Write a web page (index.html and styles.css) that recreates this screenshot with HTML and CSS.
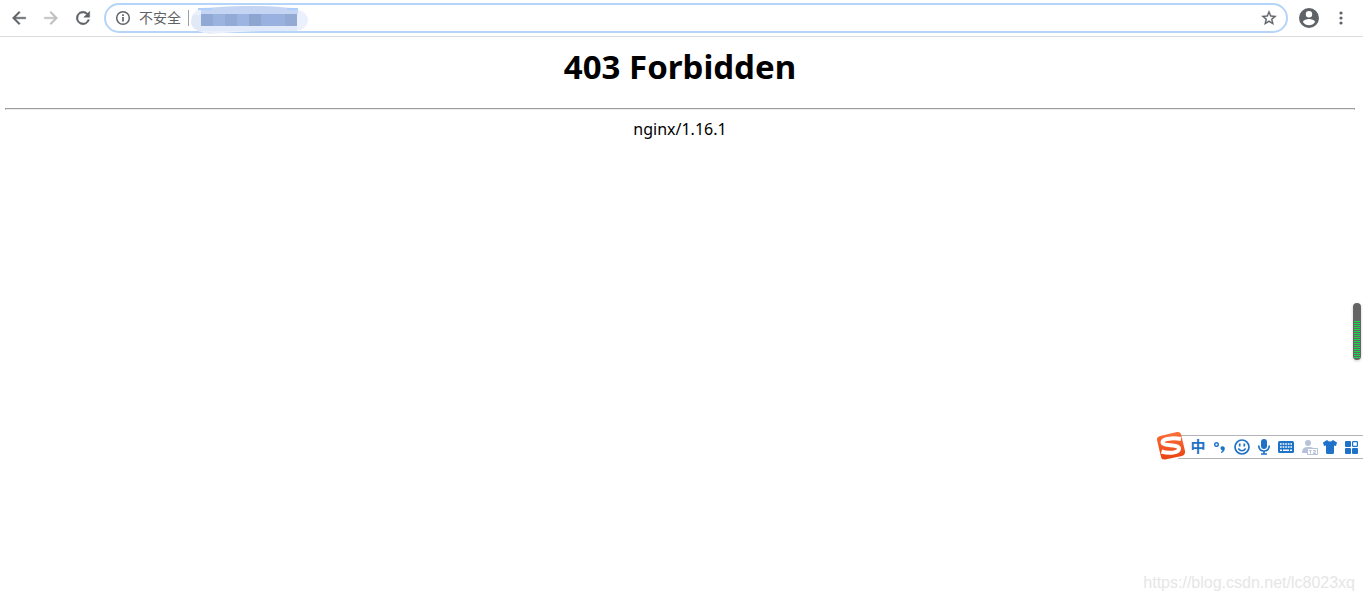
FILE: index.html
```html
<!DOCTYPE html>
<html lang="zh-CN">
<head>
<meta charset="utf-8">
<title>403 Forbidden</title>
<link rel="stylesheet" href="styles.css">
</head>
<body>
<header class="toolbar">
  <nav class="nav">
    <button class="icon-btn" aria-label="后退"><svg width="20" height="20" viewBox="0 0 24 24" fill="#5f6368"><path d="M20 11H7.800l5.600-5.600L12 4l-8 8 8 8 1.400-1.400L7.800 13H20z" stroke="#5f6368" stroke-width=".5"/></svg></button>
    <button class="icon-btn" aria-label="前进" disabled><svg width="20" height="20" viewBox="0 0 24 24" fill="#bcbec0"><path d="M4 11h12.200l-5.600-5.600L12 4l8 8-8 8-1.400-1.400 5.600-5.600H4z" stroke="#bcbec0" stroke-width=".5"/></svg></button>
    <button class="icon-btn" aria-label="重新加载"><svg width="20" height="20" viewBox="0 0 24 24" fill="#5f6368"><path d="M17.650 6.350A8 8 0 1 0 19.730 14h-2.080A6 6 0 1 1 12 6c1.660 0 3.140.69 4.220 1.780L13 11h7V4z" stroke="#5f6368" stroke-width=".6"/></svg></button>
  </nav>
  <div class="omnibox">
    <button class="icon-btn info" aria-label="网站信息"><svg width="16" height="16" viewBox="0 0 16 16" fill="none" stroke="#5f6368"><circle cx="8" cy="8" r="6.300" stroke-width="1.500"/><path d="M8 7v4.500M8 4.300v1.700" stroke-width="1.700"/></svg></button>
    <span class="security">不安全</span>
    <span class="divider"></span>
    <input class="address" type="text" aria-label="地址">
    <button class="icon-btn star" aria-label="收藏"><svg width="18" height="18" viewBox="0 0 24 24" fill="#5f6368"><path stroke="#5f6368" stroke-width=".4" d="M22 9.240l-7.190-.62L12 2 9.190 8.630 2 9.240l5.460 4.730L5.820 21 12 17.270 18.180 21l-1.630-7.030zM12 15.400l-3.760 2.270 1-4.280-3.320-2.880 4.380-.38L12 6.100l1.710 4.040 4.380.38-3.320 2.880 1 4.280z"/></svg></button>
    <svg class="redaction" width="118" height="28" viewBox="0 0 118 28" aria-hidden="true">
      <path d="M8 3Q10 1 30 1Q60-1 90 1Q103 1 108 4Q117 7 117 14Q117 23 105 25Q60 24 20 28Q0 26 0 15Q0 7 8 3z" fill="#eaf1fc"/>
      <path d="M10 3Q30 0 59 0Q90 0 107 4V8H10z" fill="#c3d5f2"/>
      <path d="M7 3h14M96 3h11" stroke="#afd0fa" stroke-width="2"/>
      <path d="M2 9h8v17h10v1Q0 26 0 16z" fill="#e1e9f6"/>
      <path d="M10 20h96v5H10z" fill="#e0eafa"/>
      <path d="M10 8h12v12H10z" fill="#91a9d4"/><path d="M22 8h12v12H22z" fill="#9ab3df"/><path d="M34 8h12v12H34z" fill="#91aad6"/><path d="M46 8h12v12H46z" fill="#9bb4e2"/><path d="M58 8h12v12H58z" fill="#8da6d1"/><path d="M70 8h24v12H70z" fill="#98b1df"/><path d="M94 8h12v12H94z" fill="#92aad4"/>
    </svg>
  </div>
  <div class="actions">
    <button class="icon-btn" aria-label="用户"><svg width="24" height="24" viewBox="0 0 24 24" fill="#5f6368"><path d="M12 2a10 10 0 1 0 0 20 10 10 0 0 0 0-20zm0 3a3.200 3.200 0 1 1 0 6.400A3.200 3.200 0 0 1 12 5zm0 14.200a7.200 7.200 0 0 1-6-3.220c.03-1.990 4-3.080 6-3.080s5.970 1.090 6 3.080a7.200 7.200 0 0 1-6 3.220z"/></svg></button>
    <button class="icon-btn" aria-label="菜单"><svg width="20" height="20" viewBox="0 0 20 20" fill="#5f6368"><circle cx="10" cy="5" r="1.600"/><circle cx="10" cy="10" r="1.600"/><circle cx="10" cy="15" r="1.600"/></svg></button>
  </div>
</header>
<main class="page">
  <h1 class="title">403 Forbidden</h1>
  <hr class="rule">
  <p class="server">nginx/1.16.1</p>
</main>
<div class="meter" aria-hidden="true"><div class="meter-bars"></div></div>
<div class="ime">
  <svg class="ime-logo" width="30" height="30" viewBox="0 0 30 30" aria-hidden="true">
    <defs><linearGradient id="flame" x1="0" y1="0" x2="0" y2="1"><stop offset="0" stop-color="#f9703c"/><stop offset="1" stop-color="#eb4210"/></linearGradient></defs>
    <path d="M4 5L21 1Q24 .5 25 3L29 20Q29.500 24 26 25L9 28.500Q5.500 29 5 26L1 9Q.5 6 4 5z" fill="url(#flame)"/>
    <path d="M25 8C17 6.500 6.500 7.500 6.500 11.300C6.500 15.500 23 13 23 17.500C23 22 13 23 5.500 20.500" fill="none" stroke="#fff" stroke-width="4"/>
  </svg>
  <div class="ime-tools">
    <button class="ime-btn ime-lang" aria-label="中文">中</button>
    <button class="ime-btn" aria-label="标点"><svg width="16" height="16" viewBox="0 0 16 16"><circle cx="4.500" cy="5.500" r="1.800" fill="none" stroke="#1e73c8" stroke-width="1.400"/><path d="M8.500 8.500Q9 7.300 10.500 7.300Q13 7.500 12.800 10Q12.300 13 9 14V12.800Q10.500 12 10.500 11.300Q8.500 11.300 8.500 8.500z" fill="#1e73c8"/></svg></button>
    <button class="ime-btn" aria-label="表情"><svg width="16" height="16" viewBox="0 0 16 16" fill="none" stroke="#1e73c8" stroke-width="1.700"><circle cx="8" cy="8" r="7"/><path d="M5.700 4.500v3M10.300 4.500v3M4.300 9.500Q8 14 11.700 9.500"/></svg></button>
    <button class="ime-btn" aria-label="语音"><svg width="16" height="16" viewBox="0 0 16 16"><rect x="5" y="0" width="6" height="10" rx="3" fill="#1e73c8"/><path d="M2.700 6.500Q3 12 8 12T13.300 6.500M8 12v3.200M5 15h6" fill="none" stroke="#1e73c8" stroke-width="1.700"/></svg></button>
    <button class="ime-btn" aria-label="软键盘"><svg width="16" height="16" viewBox="0 0 16 16"><rect y="2" width="16" height="12" rx="1.500" fill="#1e73c8"/><path d="M2 5h12M2 8h12" stroke="#fff" stroke-width="1.700" stroke-dasharray="1.700 .9"/><path d="M2 11.300h2M5 11.300h6M12 11.300h2" stroke="#fff" stroke-width="1.500"/></svg></button>
    <button class="ime-btn" aria-label="账户"><svg width="16" height="16" viewBox="-2 0 16 16" overflow="visible"><circle cx="6" cy="4" r="3" fill="#b5c2d8"/><path d="M0 14Q0 8 5 8h3q3 0 4 2H6v4z" fill="#b5c2d8"/><path d="M5.500 9.500h10v6h-10z" fill="#fff" stroke="#b5c2d8"/><path d="M7 11.500h2.500M8.500 11.500v3M11 11.500h2.500v1.500h-2v1.500H14" fill="none" stroke="#b5c2d8"/></svg></button>
    <button class="ime-btn" aria-label="皮肤"><svg width="16" height="16" viewBox="0 0 16 16"><path d="M1 3.500L5 1Q8 4 11 1L15 3.500L14 7L12 6.500V13.500Q12 15 10.500 15h-5Q4 15 4 13.500V6.500L2 7z" fill="#1e73c8"/></svg></button>
    <button class="ime-btn" aria-label="工具箱"><svg width="16" height="16" viewBox="0 0 16 16" fill="#1e73c8"><rect x="1" y="2" width="6" height="6" rx="1"/><rect x="1" y="9" width="6" height="6" rx="1"/><rect x="8" y="9" width="6" height="6" rx="1"/><rect x="8.600" y="2.600" width="4.800" height="4.800" rx=".6" fill="#fff" stroke="#1e73c8" stroke-width="1.200"/></svg></button>
  </div>
</div>
<footer class="watermark">https://blog.csdn.net/lc8023xq</footer>
</body>
</html>
```
FILE: styles.css
```css
* {
  box-sizing: border-box;
}

body {
  display: flex;
  flex-direction: column;
  position: relative;
  min-height: 100vh;
  margin: 0;
  background: #fff;
  color: #000;
  font-family: "Noto Sans", "Noto Sans CJK SC", sans-serif;
}

button {
  display: flex;
  align-items: center;
  justify-content: center;
  padding: 0;
  border: 0;
  background: none;
}

svg {
  display: block;
}

.toolbar {
  display: flex;
  align-items: center;
  gap: 11px;
  padding: 3px 12px 3px 9px;
  border-bottom: 1px solid #dadce0;
}

.nav {
  display: flex;
  gap: 12px;
}

.omnibox {
  display: flex;
  flex: 1;
  align-items: center;
  position: relative;
  height: 30px;
  margin-right: -2px;
  padding: 0 8px 0 9px;
  border: 2px solid #b5d4f9;
  border-radius: 15px;
}

.security {
  margin: 0 7px 0 8px;
  padding-bottom: 2px;
  color: #5f6368;
  font-family: "Noto Sans CJK SC", sans-serif;
  font-size: 14px;
  line-height: 20px;
}

.divider {
  width: 1px;
  height: 16px;
  background: #9aa0a6;
}

.address {
  flex: 1;
  min-width: 0;
  border: 0;
  outline: 0;
  background: none;
  font: 14px/20px "Noto Sans", sans-serif;
}

.redaction {
  position: absolute;
  top: 1px;
  left: 85px;
}

.actions {
  display: flex;
  align-items: center;
  gap: 10px;
}

.page {
  flex: 1;
  padding: 6px 8px 0 5px;
  text-align: center;
}

.title {
  margin: 0;
  font-size: 33px;
  line-height: 48px;
}

.rule {
  margin: 17px 0 7px;
  border: 1px solid #9a9a9a;
  border-bottom-color: #eee;
}

.server {
  margin: 0;
  font-size: 16px;
  line-height: 24px;
}

.meter {
  position: absolute;
  top: 303px;
  right: 2px;
  width: 8px;
  height: 57px;
  padding: 18px 1px 2px;
  border-radius: 4px;
  background: #646464;
  box-shadow: 0 1px 3px #ccc;
}

.meter-bars {
  height: 37px;
  background: repeating-linear-gradient(#18d850 0 1px, #646464 1px 2px);
}

.ime {
  display: flex;
  align-items: center;
  position: absolute;
  top: 431px;
  right: 0;
}

.ime-logo {
  position: relative;
  z-index: 1;
}

.ime-tools {
  display: flex;
  align-items: center;
  gap: 6px;
  height: 24px;
  margin: 2px 0 0 -8px;
  padding: 0 3px 0 12px;
  border: solid #b4b4b8;
  border-width: 1px 0;
  background: #fff;
}

.ime-btn {
  width: 16px;
  height: 16px;
}

.ime-lang {
  padding-bottom: 2px;
  color: #1e73c8;
  font: bold 15px/14px "Noto Sans CJK SC", sans-serif;
}

.watermark {
  padding: 0 8px 8px;
  color: #e6e6e6;
  font: 16px/20px "Liberation Sans", Arial, sans-serif;
  text-align: right;
}
```
